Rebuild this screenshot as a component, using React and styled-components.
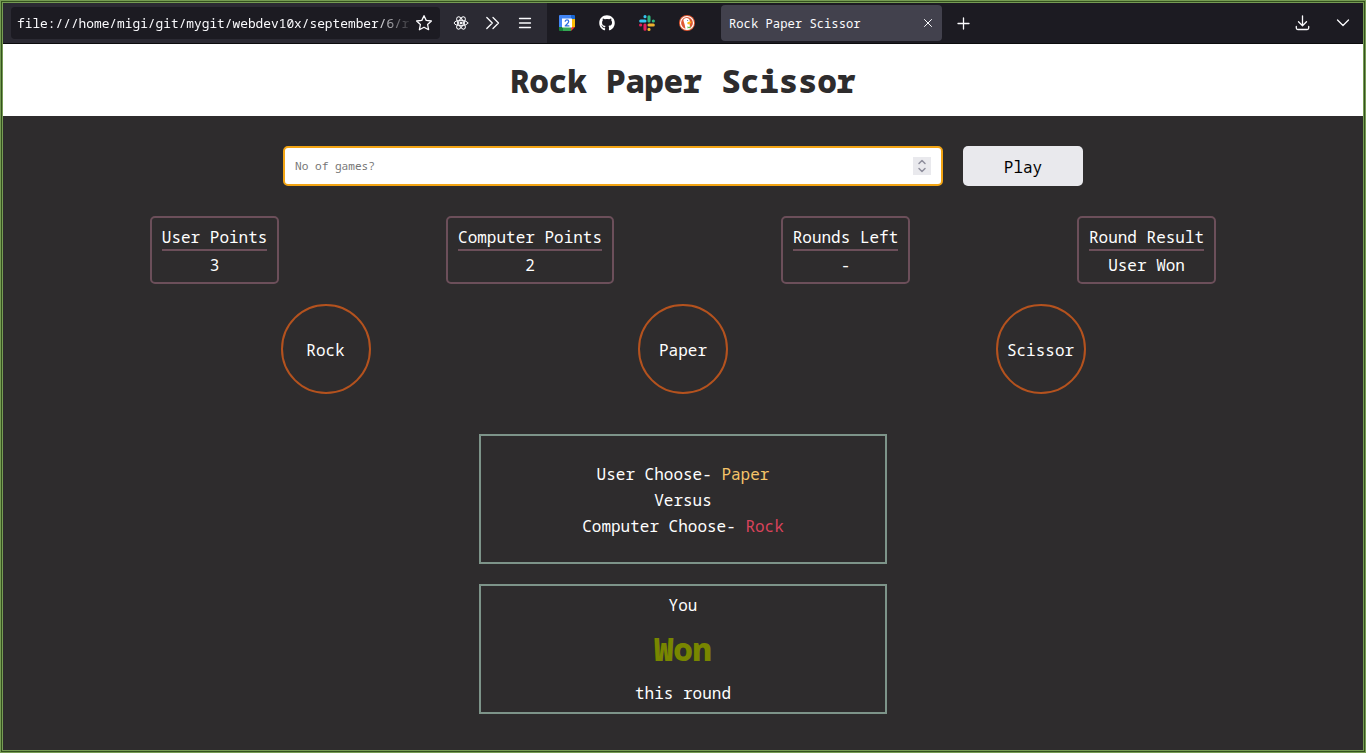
import React from "react";
import styled, { createGlobalStyle } from "styled-components";
import { FaGithub } from "react-icons/fa";

const Global = createGlobalStyle`
  * { box-sizing: border-box; }
  body {
    margin: 0;
    font-family: "Noto Sans Mono", "DejaVu Sans Mono", monospace;
    font-size: 16px;
    overflow: hidden;
  }
`;

const Window = styled.div`
  height: 753px;
  border: 3px double #769c53;
  background: #34521f;
  display: flex;
  flex-direction: column;
`;

const Toolbar = styled.div`
  height: 41px;
  flex: none;
  display: flex;
  background: #1c1b22;
  border-bottom: 1px solid #0c0c0d;
  color: #fbfbfe;
`;

const NavBar = styled.div`
  width: 544px;
  display: flex;
  align-items: center;
  padding-left: 8px;
  background: #2b2a33;
`;

const UrlBox = styled.div`
  width: 429px;
  height: 32px;
  border-radius: 4px;
  background: #1c1b22;
  display: flex;
  align-items: center;
  padding: 0 8px 0 6px;
  margin-right: 13px;
`;

const Url = styled.div`
  width: 399px;
  white-space: nowrap;
  font-size: 12.83px;
  line-height: 20px;
  mask-image: linear-gradient(to right, #000 358px, transparent 396px);
`;

const Icon = styled.svg`
  display: block;
  flex: none;
  width: ${(p) => p.$size || 16}px;
  height: ${(p) => p.$size || 16}px;
  margin-left: ${(p) => p.$gap || 0}px;
  fill: none;
  stroke: ${(p) => p.$stroke || "#fbfbfe"};
  stroke-width: 1.3;
  stroke-linecap: round;
  stroke-linejoin: round;
`;

const PinnedTabs = styled.div`
  display: flex;
  align-items: center;
  gap: 24px;
  padding: 0 26px 0 12px;
`;

const Tab = styled.div`
  width: 221px;
  height: 36px;
  margin-top: 2px;
  padding: 0 6px 0 8px;
  border-radius: 4px;
  background: #42414d;
  display: flex;
  align-items: center;
  justify-content: space-between;
  font-size: 12.2px;
`;

const TabActions = styled.div`
  flex: 1;
  display: flex;
  align-items: center;
  padding: 0 12px 0 13px;
`;

const Spacer = styled.div`
  flex: 1;
`;

const Header = styled.header`
  height: 72px;
  flex: none;
  background: #fff;
  display: flex;
  align-items: center;
  justify-content: center;
  padding-top: 2px;
`;

const Title = styled.h1`
  margin: 0;
  font-size: 32px;
  line-height: 44px;
  font-weight: 900;
  color: #2e2c2d;
`;

const Page = styled.main`
  flex: 1;
  background: #2e2c2d;
  color: #fff;
  display: flex;
  flex-direction: column;
  align-items: center;
  padding-top: 30px;
`;

const Form = styled.div`
  display: flex;
  gap: 20px;
`;

const Field = styled.div`
  width: 660px;
  height: 40px;
  border: 2px solid #f2a413;
  border-radius: 5px;
  background: #fff;
  display: flex;
  align-items: center;
  justify-content: space-between;
  padding: 0 10px;
`;

const Placeholder = styled.span`
  padding-bottom: 2px;
  color: #757575;
  font-size: 11.1px;
`;

const Spinner = styled.div`
  width: 18px;
  height: 18px;
  background: #e9e9ed;
  display: flex;
  align-items: center;
  justify-content: center;
`;

const PlayButton = styled.button`
  width: 120px;
  height: 40px;
  padding: 2px 0 0;
  border: 0;
  border-radius: 5px;
  background: #e9e9ed;
  color: #000;
  font: inherit;
`;

const Stats = styled.div`
  width: 1066.4px;
  margin-top: 30px;
  display: flex;
  justify-content: space-between;
`;

const Stat = styled.div`
  height: 68px;
  padding: 8px 10px;
  border: 2px solid #6c4f5a;
  border-radius: 5px;
  text-align: center;
`;

const StatName = styled.div`
  height: 25px;
  line-height: 22px;
  border-bottom: 2px solid #6c4f5a;
`;

const StatValue = styled.div`
  margin-top: 3px;
  line-height: 22px;
`;

const Choices = styled.div`
  width: 805px;
  margin-top: 20px;
  display: flex;
  justify-content: space-between;
`;

const Choice = styled.div`
  width: 90px;
  height: 90px;
  border: 2px solid #b4521e;
  border-radius: 50%;
  display: flex;
  align-items: center;
  justify-content: center;
  padding-top: 2px;
`;

const Panel = styled.section`
  width: 408px;
  height: 130px;
  margin-top: ${(p) => p.$top}px;
  border: 2px solid #7d9489;
  display: flex;
  flex-direction: column;
  align-items: center;
  justify-content: ${(p) => (p.$spread ? "space-between" : "center")};
  padding: ${(p) => (p.$spread ? "8px 0" : "2px 0 0")};
`;

const Line = styled.div`
  line-height: ${(p) => p.$height}px;
  white-space: pre;
`;

const Pick = styled.span`
  color: ${(p) => p.$color};
`;

const Outcome = styled.div`
  font-size: 32px;
  line-height: 44px;
  font-weight: 900;
  color: #788600;
`;

const stats = [
  ["User Points", "3"],
  ["Computer Points", "2"],
  ["Rounds Left", "-"],
  ["Round Result", "User Won"],
];

const CalendarIcon = () => (
  <Icon viewBox="0 0 16 16" $stroke="none">
    <path fill="#4285f4" d="M1 0h11v4H4v8H0V1q0-1 1-1z" />
    <path fill="#1967d2" d="M12 0h3q1 0 1 1v3h-4z" />
    <path fill="#fbbc04" d="M12 4h4v8h-4z" />
    <path fill="#34a853" d="M4 12h8v4H4z" />
    <path fill="#188038" d="M0 12h4v4H1q-1 0-1-1z" />
    <path fill="#ea4335" d="M12 12h4l-4 4z" />
    <path fill="#fff" d="M3 3.500h10v9H3z" />
    <path
      stroke="#2f6fde"
      d="M6.200 6.200Q6.600 4.900 8 4.900q1.700 0 1.700 1.600Q9.700 7.600 6.200 10.900h3.700"
    />
  </Icon>
);

const SlackIcon = () => (
  <Icon viewBox="0 0 16 16">
    <g strokeWidth="3.100">
      <path stroke="#36c5f0" d="M1.700 6h4.300M6 1.600v.1" />
      <path stroke="#2eb67d" d="M10 1.700v4.300M14.400 6h-.1" />
      <path stroke="#ecb22e" d="M10 10h4.300M10 14.400v-.1" />
      <path stroke="#e01e5a" d="M6 10v4.300M1.600 10h.1" />
    </g>
  </Icon>
);

const DuckIcon = () => (
  <Icon viewBox="0 0 16 16" $stroke="none">
    <circle cx="8" cy="8" r="8" fill="#de5833" />
    <circle cx="8" cy="8" r="6.500" stroke="#fff" strokeWidth="1.200" />
    <path
      fill="#fff"
      d="M4.500 4.500Q5.500 2.600 8 3q3 .7 2.900 3.800L10.500 9l1 4.700q-2.500 1.200-5 .3Q6 10 5 7.500 4.200 5.500 4.500 4.500z"
    />
    <path fill="#fdb913" d="M8.500 7.200q2-1 4.200-.5-.8 2.300-3.700 2.800-1.100-.7-.5-2.300z" />
    <path fill="#67bd47" d="M8.500 11.300l1.200.6 1.800-.7v2.300l-1.700-.6-1.300.5z" />
    <circle cx="8.700" cy="5.400" r=".5" fill="#2d4f8e" />
  </Icon>
);

export default function App() {
  return (
    <>
      <Global />
      <Window>
        <Toolbar>
          <NavBar>
            <UrlBox>
              <Url>file:///home/migi/git/mygit/webdev10x/september/6/r</Url>
              <Icon viewBox="0 0 16 16">
                <path d="M8 .7l2.200 4.700 5.200.6-3.800 3.500 1 5.200L8 12.200l-4.600 2.500 1-5.200L.6 6l5.200-.6z" />
              </Icon>
            </UrlBox>
            <Icon viewBox="0 0 16 16">
              <g strokeWidth="1">
                <ellipse cx="8" cy="8" rx="6.800" ry="2.700" />
                <ellipse cx="8" cy="8" rx="6.800" ry="2.700" transform="rotate(60 8 8)" />
                <ellipse cx="8" cy="8" rx="6.800" ry="2.700" transform="rotate(120 8 8)" />
                <circle cx="8" cy="8" r="1" fill="#fbfbfe" />
              </g>
            </Icon>
            <Icon viewBox="0 0 16 16" $gap={15}>
              <path d="M2.800 2.500L8.300 8l-5.500 5.500M9 2.500L14.500 8 9 13.500" />
            </Icon>
            <Icon viewBox="0 0 16 16" $gap={17}>
              <path d="M2.500 3.500h11M2.500 8h11M2.500 12.500h11" />
            </Icon>
          </NavBar>
          <PinnedTabs>
            <CalendarIcon />
            <FaGithub size={16} color="#fff" />
            <SlackIcon />
            <DuckIcon />
          </PinnedTabs>
          <Tab>
            Rock Paper Scissor
            <Icon viewBox="0 0 16 16">
              <path strokeWidth="1" d="M4.500 4.500l7 7M11.500 4.500l-7 7" />
            </Icon>
          </Tab>
          <TabActions>
            <Icon viewBox="0 0 16 16">
              <path d="M8.500 3v11M3 8.500h11" />
            </Icon>
            <Spacer />
            <Icon viewBox="0 0 16 16">
              <path d="M7.500 .8v9.700M3.500 6.800l4 4 4-4M1.300 11.500v1.500q0 1.500 1.500 1.500h9.400q1.500 0 1.500-1.500v-1.500" />
            </Icon>
            <Icon viewBox="0 0 16 16" $gap={24}>
              <path d="M2.500 5L8 10.500 13.500 5" />
            </Icon>
          </TabActions>
        </Toolbar>
        <Header>
          <Title>Rock Paper Scissor</Title>
        </Header>
        <Page>
          <Form>
            <Field>
              <Placeholder>No of games?</Placeholder>
              <Spinner>
                <Icon viewBox="0 0 16 16" $stroke="#8f8f9d">
                  <path strokeWidth="1.500" d="M5 5.500l3-3 3 3M5 10.500l3 3 3-3" />
                </Icon>
              </Spinner>
            </Field>
            <PlayButton>Play</PlayButton>
          </Form>
          <Stats>
            {stats.map(([name, value]) => (
              <Stat key={name}>
                <StatName>{name}</StatName>
                <StatValue>{value}</StatValue>
              </Stat>
            ))}
          </Stats>
          <Choices>
            {["Rock", "Paper", "Scissor"].map((name) => (
              <Choice key={name}>{name}</Choice>
            ))}
          </Choices>
          <Panel $top={40}>
            <Line $height={26}>
              User Choose- <Pick $color="#f5c469">Paper</Pick>
            </Line>
            <Line $height={26}>Versus</Line>
            <Line $height={26}>
              Computer Choose- <Pick $color="#d9435b">Rock</Pick>
            </Line>
          </Panel>
          <Panel $top={20} $spread>
            <Line $height={22}>You</Line>
            <Outcome>Won</Outcome>
            <Line $height={22}>this round</Line>
          </Panel>
        </Page>
      </Window>
    </>
  );
}
